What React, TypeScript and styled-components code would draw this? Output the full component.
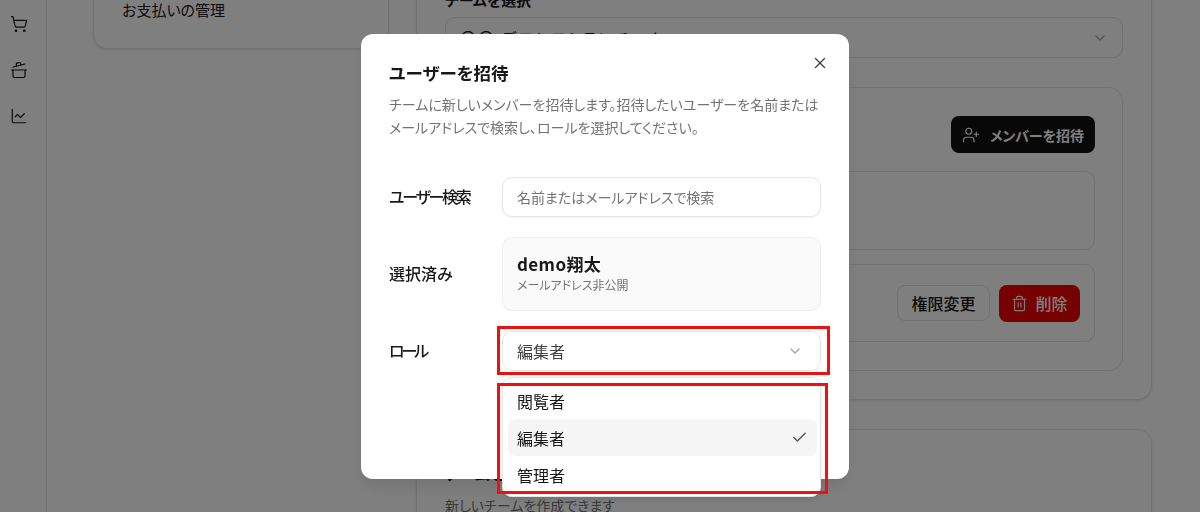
import styled, { createGlobalStyle } from "styled-components";
import {
  Check,
  ChartLine,
  ChevronDown,
  CookingPot,
  ShoppingCart,
  Trash2,
  UserPlus,
  X,
} from "lucide-react";

const GlobalStyle = createGlobalStyle`
  * {
    box-sizing: border-box;
  }
  html, body {
    margin: 0;
    height: 100%;
    overflow: hidden;
    background: #fff;
  }
  body {
    font-family: "Noto Sans CJK JP", "Noto Sans", sans-serif;
    font-feature-settings: "palt";
    color: #171717;
  }
  button, input {
    font-feature-settings: "palt";
  }
`;

// the page is scrolled down a little in the screenshot
const Layout = styled.div`
  display: flex;
  margin-top: -60px;
  min-height: 640px;
`;

const Sidebar = styled.nav`
  width: 47px;
  flex-shrink: 0;
  border-right: 1px solid #e5e5e5;
  padding: 75px 0 0 10px;
  display: flex;
  flex-direction: column;
  gap: 28px;
  color: #171717;
`;

const Main = styled.main`
  flex: 1;
  padding: 20px 48px 0 46px;
  display: grid;
  grid-template-columns: 296px 736px;
  column-gap: 27px;
  align-items: start;
`;

const Card = styled.section`
  background: #fff;
  border: 1px solid #e5e5e5;
  border-radius: 14px;
  box-shadow: 0 1px 3px rgba(0, 0, 0, 0.1);
`;

const NavCard = styled(Card)`
  padding: 37px 28px 26px 28px;
  font-size: 15px;
  line-height: 24px;
`;

const RightColumn = styled.div`
  display: flex;
  flex-direction: column;
  gap: 29px;
`;

const TeamCard = styled(Card)`
  padding: 29px 28px 28px 28px;
`;

const CreateCard = styled(Card)`
  padding: 31px 28px 28px 28px;
`;

const FieldLabel = styled.div`
  font-size: 15px;
  font-weight: 600;
  line-height: 20px;
  margin-bottom: 7px;
`;

const TeamSelect = styled.div`
  height: 41px;
  border: 1px solid #e5e5e5;
  border-radius: 10px;
  padding: 0 14px;
  display: flex;
  align-items: center;
  justify-content: space-between;
  font-size: 16px;
  color: #a3a3a3;
  margin-bottom: 29px;
`;

const TeamName = styled.span`
  color: #171717;
  letter-spacing: 2px;
`;

const MembersPanel = styled.div`
  border: 1px solid #e5e5e5;
  border-radius: 14px;
  padding: 28px 27px 28px 27px;
  display: flex;
  flex-direction: column;
  gap: 14px;
`;

const PanelHeader = styled.div`
  display: flex;
  justify-content: flex-end;
  margin-bottom: 4px;
`;

const InviteButton = styled.button`
  height: 37px;
  width: 144px;
  padding: 0;
  border: none;
  border-radius: 8px;
  background: #111;
  color: #fff;
  font: inherit;
  font-size: 14px;
  font-weight: 600;
  white-space: nowrap;
  display: flex;
  align-items: center;
  justify-content: center;
  gap: 10px;
`;

const MemberRow = styled.div<{ $height: number }>`
  height: ${(p) => p.$height}px;
  border: 1px solid #e5e5e5;
  border-radius: 10px;
  padding: 0 14px;
  display: flex;
  align-items: center;
  justify-content: flex-end;
  gap: 9px;
`;

const RoleButton = styled.button`
  height: 36px;
  width: 93px;
  padding: 0;
  border: 1px solid #e5e5e5;
  border-radius: 8px;
  background: #fff;
  color: #171717;
  font: inherit;
  font-size: 16px;
  font-weight: 500;
`;

const DeleteButton = styled.button`
  height: 37px;
  width: 81px;
  padding: 0;
  border: none;
  border-radius: 8px;
  background: #ee0000;
  color: #fff;
  font: inherit;
  font-size: 16px;
  font-weight: 500;
  display: flex;
  align-items: center;
  justify-content: center;
  gap: 7px;
`;

const CreateTitle = styled.h3`
  margin: 0 0 10px;
  font-size: 16px;
  font-weight: 600;
  line-height: 24px;
`;

const CreateText = styled.p`
  margin: 0;
  font-size: 14px;
  line-height: 20px;
  color: #737373;
`;

const Overlay = styled.div`
  position: fixed;
  inset: 0;
  background: rgba(0, 0, 0, 0.5);
`;

const Modal = styled.div`
  position: absolute;
  left: 361px;
  top: 34px;
  width: 488px;
  height: 445px;
  background: #fff;
  border-radius: 12px;
  padding: 28px;
  box-shadow: 0 10px 15px -3px rgba(0, 0, 0, 0.1);
`;

const CloseButton = styled.button`
  position: absolute;
  top: 20px;
  right: 20px;
  width: 18px;
  height: 18px;
  padding: 0;
  border: none;
  background: none;
  color: #404040;
  display: flex;
`;

const Title = styled.h2`
  margin: 0 0 9px;
  font-size: 17.5px;
  font-weight: 600;
  line-height: 22px;
`;

const Description = styled.p`
  margin: 0 0 38px;
  font-size: 14px;
  line-height: 23px;
  color: #737373;
  white-space: nowrap;
`;

const Form = styled.div`
  display: grid;
  grid-template-columns: 113px 319px;
  row-gap: 20px;
  align-items: center;
`;

// the kana in the reference's font run much narrower than the kanji
const RowLabel = styled.label<{ $tracking?: number }>`
  font-size: 16px;
  font-weight: 500;
  padding-bottom: 3px;
  letter-spacing: ${(p) => p.$tracking ?? 0}px;
`;

const SearchInput = styled.input`
  height: 40px;
  border: 1px solid #e5e5e5;
  border-radius: 10px;
  padding: 0 14px;
  font: inherit;
  font-size: 14px;
  box-shadow: 0 1px 2px rgba(0, 0, 0, 0.05);
  outline: none;
  &::placeholder {
    color: #737373;
    opacity: 1;
  }
`;

const SelectedBox = styled.div`
  height: 74px;
  border: 1px solid #eeeeee;
  border-radius: 10px;
  background: #fafafa;
  padding: 14px 14px;
`;

const SelectedName = styled.div`
  font-size: 17px;
  font-weight: 600;
  line-height: 24px;
  letter-spacing: 0.4px;
`;

const SelectedMail = styled.div`
  font-size: 12px;
  line-height: 18px;
  color: #737373;
`;

const RoleField = styled.div`
  position: relative;
  height: 40px;
`;

const RoleTrigger = styled.div`
  height: 40px;
  border: 1px solid #e5e5e5;
  border-radius: 10px;
  padding: 0 17px 0 14px;
  display: flex;
  align-items: center;
  justify-content: space-between;
  font-size: 16px;
  color: #404040;
`;

const Dropdown = styled.ul`
  position: absolute;
  top: 46px;
  left: 0;
  right: 0;
  height: 120px;
  margin: 0;
  padding: 4px 3px 4px 5px;
  list-style: none;
  background: #fff;
  border: 1px solid #e5e5e5;
  border-radius: 10px;
  box-shadow: 0 4px 6px -1px rgba(0, 0, 0, 0.1);
`;

const Option = styled.li<{ $active?: boolean }>`
  height: 37px;
  border-radius: 8px;
  padding: 0 9px;
  display: flex;
  align-items: center;
  justify-content: space-between;
  font-size: 16px;
  background: ${(p) => (p.$active ? "#f5f5f5" : "transparent")};
`;

// red boxes drawn on top of the screenshot by whoever annotated it
const Annotation = styled.div<{ $inset: string }>`
  position: absolute;
  inset: ${(p) => p.$inset};
  border: 3px solid #ee1111;
  pointer-events: none;
`;

export default function App() {
  return (
    <>
      <GlobalStyle />
      <Layout>
        <Sidebar>
          <ShoppingCart size={18} strokeWidth={1.6} />
          <CookingPot size={18} strokeWidth={1.6} />
          <ChartLine size={18} strokeWidth={1.6} />
        </Sidebar>
        <Main>
          <NavCard>お支払いの管理</NavCard>
          <RightColumn>
            <TeamCard>
              <FieldLabel>チームを選択</FieldLabel>
              <TeamSelect>
                <TeamName>〇〇 デモレストランチーム</TeamName>
                <ChevronDown size={16} />
              </TeamSelect>
              <MembersPanel>
                <PanelHeader>
                  <InviteButton>
                    <UserPlus size={18} strokeWidth={1.6} />
                    メンバーを招待
                  </InviteButton>
                </PanelHeader>
                <MemberRow $height={79} />
                <MemberRow $height={78}>
                  <RoleButton>権限変更</RoleButton>
                  <DeleteButton>
                    <Trash2 size={17} strokeWidth={1.6} />
                    削除
                  </DeleteButton>
                </MemberRow>
              </MembersPanel>
            </TeamCard>
            <CreateCard>
              <CreateTitle>チームを作成</CreateTitle>
              <CreateText>新しいチームを作成できます</CreateText>
            </CreateCard>
          </RightColumn>
        </Main>
      </Layout>
      <Overlay>
        <Modal>
          <CloseButton>
            <X size={18} strokeWidth={1.8} />
          </CloseButton>
          <Title>ユーザーを招待</Title>
          <Description>
            チームに新しいメンバーを招待します。招待したいユーザーを名前または
            <br />
            メールアドレスで検索し、ロールを選択してください。
          </Description>
          <Form>
            <RowLabel $tracking={-2.3}>ユーザー検索</RowLabel>
            <SearchInput placeholder="名前またはメールアドレスで検索" />
            <RowLabel>選択済み</RowLabel>
            <SelectedBox>
              <SelectedName>demo翔太</SelectedName>
              <SelectedMail>メールアドレス非公開</SelectedMail>
            </SelectedBox>
            <RowLabel $tracking={-3}>ロール</RowLabel>
            <RoleField>
              <RoleTrigger>
                編集者
                <ChevronDown size={16} color="#a3a3a3" />
              </RoleTrigger>
              <Annotation $inset="-5px -9px -4px -5px" />
              <Dropdown>
                <Option>閲覧者</Option>
                <Option $active>
                  編集者
                  <Check size={17} color="#525252" />
                </Option>
                <Option>管理者</Option>
                <Annotation $inset="5px -8px 2px -6px" />
              </Dropdown>
            </RoleField>
          </Form>
        </Modal>
      </Overlay>
    </>
  );
}
